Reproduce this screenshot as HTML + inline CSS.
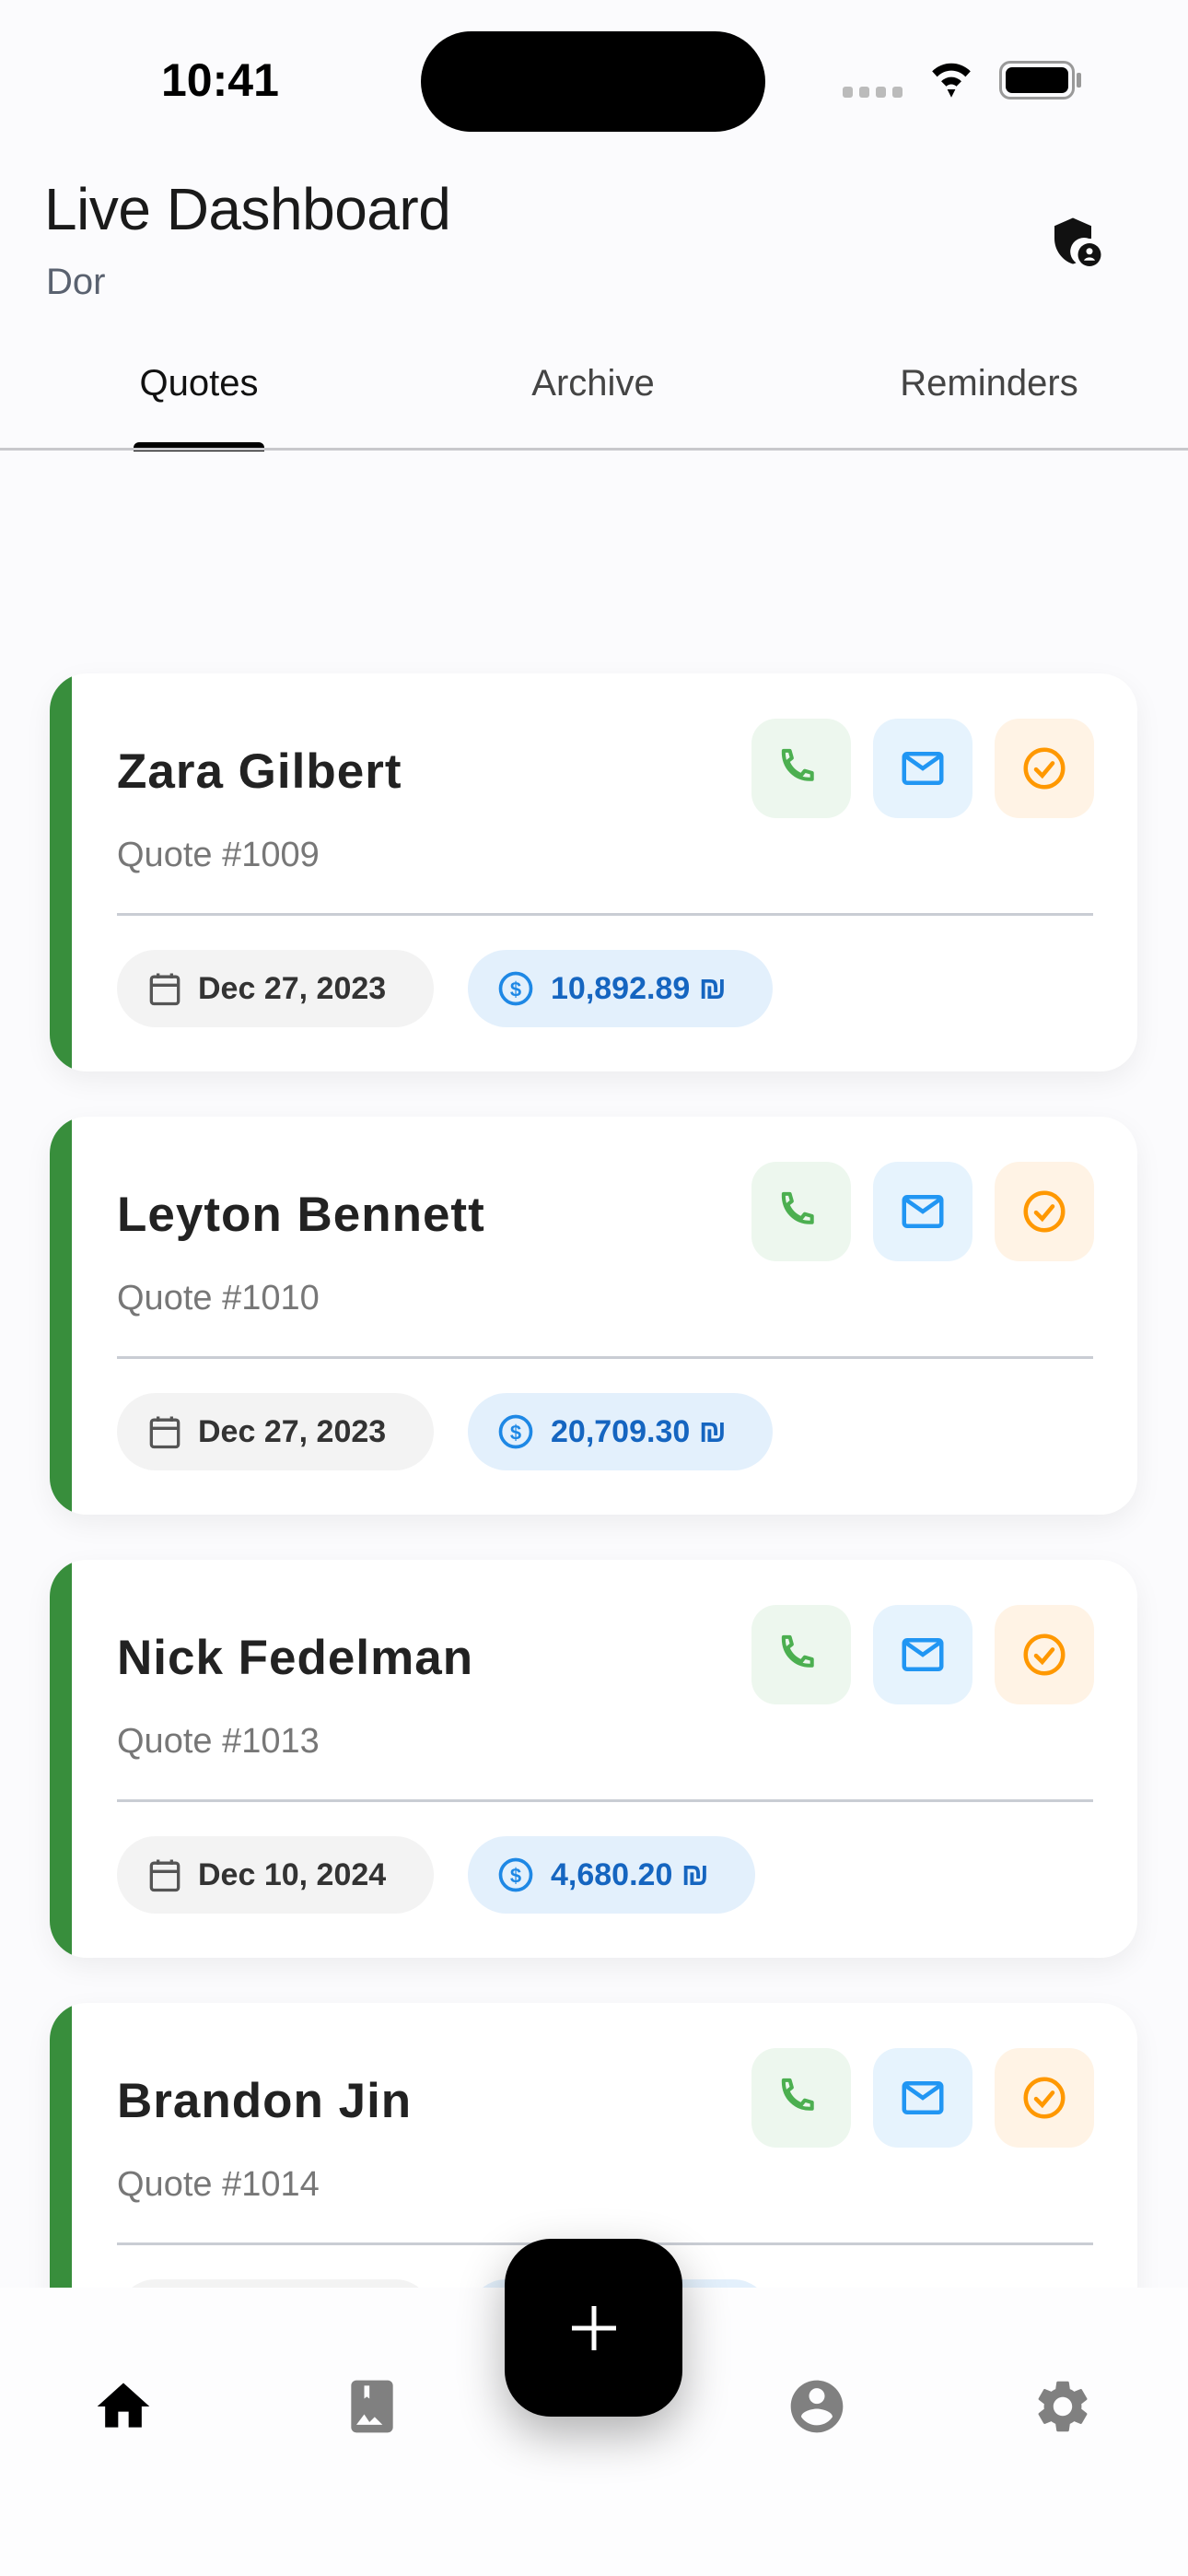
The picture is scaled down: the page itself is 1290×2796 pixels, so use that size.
<!DOCTYPE html>
<html><head><meta charset="utf-8"><style>
*{margin:0;padding:0;box-sizing:border-box}
body{width:1290px;height:2796px;background:#fbfbfd;font-family:"Liberation Sans",sans-serif;position:relative;overflow:hidden}
.abs{position:absolute}
.card{position:absolute;left:54px;width:1181px;height:432px;background:#fff;border-radius:40px;overflow:hidden;box-shadow:0 10px 30px rgba(0,0,0,0.06)}
.card .bar{position:absolute;left:0;top:0;bottom:0;width:24px;background:#388e3c}
.name{position:absolute;left:73px;top:76px;font-size:53px;font-weight:bold;color:#222;letter-spacing:1px}
.qn{position:absolute;left:73px;top:176px;font-size:38px;color:#777}
.div{position:absolute;left:73px;top:260px;width:1060px;height:3px;background:#c9cdd4}
.chip{position:absolute;top:300px;height:84px;border-radius:42px;font-size:34px;font-weight:bold;display:flex;align-items:center}
.date{left:73px;width:344px;background:#f3f3f3;color:#333;padding-left:30px}
.amt{left:454px;background:#e3f0fc;color:#1565c0;padding:0 50px 0 30px}
.btn{position:absolute;top:49px;width:108px;height:108px;border-radius:27px;display:flex;align-items:center;justify-content:center}
.b1{left:762px;background:#edf7ee}.b2{left:894px;background:#e6f3fd}.b3{left:1026px;background:#fff3e5}
.tab{position:absolute;top:394px;font-size:40px;color:#444;transform:translateX(-50%)}
</style></head><body>
<div class="abs" style="left:175px;top:58px;font-size:50px;font-weight:bold;color:#000">10:41</div>
<div class="abs" style="left:457px;top:34px;width:374px;height:109px;border-radius:55px;background:#000"></div>
<div class="abs" style="left:915px;top:94px;display:flex;gap:7px"><div style="width:11px;height:12px;background:#bbb;border-radius:3px"></div><div style="width:11px;height:12px;background:#bbb;border-radius:3px"></div><div style="width:11px;height:12px;background:#bbb;border-radius:3px"></div><div style="width:11px;height:12px;background:#bbb;border-radius:3px"></div></div>
<svg class="abs" style="left:1004px;top:62px" width="58" height="46" viewBox="0 0 40 42"><path d="M1 14 A27 27 0 0 1 39 14 L34 19.5 A19 19 0 0 0 6 19.5Z M10 24 A14 14 0 0 1 30 24 L25 29 A7 7 0 0 0 15 29Z M16 32 L20 40 L24 32Z" fill="#000"/></svg>
<div class="abs" style="left:1085px;top:66px;width:82px;height:42px;border:3px solid #999;border-radius:12px;padding:4px"><div style="width:100%;height:100%;background:#000;border-radius:7px"></div></div>
<div class="abs" style="left:1169px;top:79px;width:5px;height:16px;background:#999;border-radius:2px"></div>

<div class="abs" style="left:48px;top:190px;font-size:64px;color:#1a1a1a;letter-spacing:-0.5px">Live Dashboard</div>
<div class="abs" style="left:50px;top:284px;font-size:40px;color:#5a6270">Dor</div>
<svg class="abs" style="left:1140px;top:234px" width="60" height="60" viewBox="0 0 24 24"><path d="M10 1 L2 4.5 V10 C2 15 5.4 19.6 10 21 C10.5 20.9 11 20.7 11.4 20.5 A6 6 0 0 1 17 10 C17.5 10 18 10 18 10 V4.5Z" fill="#111"/><circle cx="17.2" cy="17" r="5" fill="#111"/><circle cx="17.2" cy="15.5" r="1.4" fill="#fff"/><path d="M14.8 19.5 A2.6 2.2 0 0 1 19.6 19.5Z" fill="#fff"/></svg>

<div class="tab" style="left:216px;color:#111">Quotes</div>
<div class="tab" style="left:644px">Archive</div>
<div class="tab" style="left:1074px">Reminders</div>
<div class="abs" style="left:145px;top:480px;width:142px;height:10px;background:#000;border-radius:6px 6px 0 0"></div>
<div class="abs" style="left:0;top:486px;width:1290px;height:3px;background:#c8c8cc"></div>

<!-- cards -->
<div class="card" style="top:731px"><div class="bar"></div><div class="name">Zara Gilbert</div><div class="qn">Quote #1009</div><div class="div"></div>
<div class="chip date"><svg width="44" height="44" viewBox="0 0 24 24"><rect x="4" y="5" width="16" height="16" rx="1.5" fill="none" stroke="#555" stroke-width="1.8"/><path d="M4 10H20M8 3V6M16 3V6" stroke="#555" stroke-width="1.8"/></svg><span style="margin-left:14px">Dec 27, 2023</span></div>
<div class="chip amt"><svg width="44" height="44" viewBox="0 0 24 24"><circle cx="12" cy="12" r="9" fill="none" stroke="#1e88e5" stroke-width="2"/><text x="12" y="16.5" font-size="12" text-anchor="middle" fill="#1e88e5" font-family="Liberation Sans">$</text></svg><span style="margin-left:16px">10,892.89 ₪</span></div>
<div class="btn b1"><svg width="54" height="54" viewBox="0 0 24 24"><path d="M3.5 3.5h3l1 3.5-2 1.6c1.2 3 3.6 5.4 6.6 6.6l1.6-2 3.5 1v3c-8 .5-14-5.5-13.7-13.7z" fill="none" stroke="#4caf50" stroke-width="1.8" stroke-linejoin="round"/></svg></div>
<div class="btn b2"><svg width="54" height="54" viewBox="0 0 24 24"><rect x="3" y="5" width="18" height="14" rx="1.5" fill="none" stroke="#2196f3" stroke-width="2"/><path d="M3.5 6l8.5 6 8.5-6" fill="none" stroke="#2196f3" stroke-width="2"/></svg></div>
<div class="btn b3"><svg width="54" height="54" viewBox="0 0 24 24"><circle cx="12" cy="12" r="9" fill="none" stroke="#ff9800" stroke-width="2"/><path d="M8 12.5l3 3 5-6" fill="none" stroke="#ff9800" stroke-width="2" stroke-linecap="round"/></svg></div></div>

<div class="card" style="top:1212px"><div class="bar"></div><div class="name">Leyton Bennett</div><div class="qn">Quote #1010</div><div class="div"></div>
<div class="chip date"><svg width="44" height="44" viewBox="0 0 24 24"><rect x="4" y="5" width="16" height="16" rx="1.5" fill="none" stroke="#555" stroke-width="1.8"/><path d="M4 10H20M8 3V6M16 3V6" stroke="#555" stroke-width="1.8"/></svg><span style="margin-left:14px">Dec 27, 2023</span></div>
<div class="chip amt"><svg width="44" height="44" viewBox="0 0 24 24"><circle cx="12" cy="12" r="9" fill="none" stroke="#1e88e5" stroke-width="2"/><text x="12" y="16.5" font-size="12" text-anchor="middle" fill="#1e88e5" font-family="Liberation Sans">$</text></svg><span style="margin-left:16px">20,709.30 ₪</span></div>
<div class="btn b1"><svg width="54" height="54" viewBox="0 0 24 24"><path d="M3.5 3.5h3l1 3.5-2 1.6c1.2 3 3.6 5.4 6.6 6.6l1.6-2 3.5 1v3c-8 .5-14-5.5-13.7-13.7z" fill="none" stroke="#4caf50" stroke-width="1.8" stroke-linejoin="round"/></svg></div>
<div class="btn b2"><svg width="54" height="54" viewBox="0 0 24 24"><rect x="3" y="5" width="18" height="14" rx="1.5" fill="none" stroke="#2196f3" stroke-width="2"/><path d="M3.5 6l8.5 6 8.5-6" fill="none" stroke="#2196f3" stroke-width="2"/></svg></div>
<div class="btn b3"><svg width="54" height="54" viewBox="0 0 24 24"><circle cx="12" cy="12" r="9" fill="none" stroke="#ff9800" stroke-width="2"/><path d="M8 12.5l3 3 5-6" fill="none" stroke="#ff9800" stroke-width="2" stroke-linecap="round"/></svg></div></div>

<div class="card" style="top:1693px"><div class="bar"></div><div class="name">Nick Fedelman</div><div class="qn">Quote #1013</div><div class="div"></div>
<div class="chip date"><svg width="44" height="44" viewBox="0 0 24 24"><rect x="4" y="5" width="16" height="16" rx="1.5" fill="none" stroke="#555" stroke-width="1.8"/><path d="M4 10H20M8 3V6M16 3V6" stroke="#555" stroke-width="1.8"/></svg><span style="margin-left:14px">Dec 10, 2024</span></div>
<div class="chip amt"><svg width="44" height="44" viewBox="0 0 24 24"><circle cx="12" cy="12" r="9" fill="none" stroke="#1e88e5" stroke-width="2"/><text x="12" y="16.5" font-size="12" text-anchor="middle" fill="#1e88e5" font-family="Liberation Sans">$</text></svg><span style="margin-left:16px">4,680.20 ₪</span></div>
<div class="btn b1"><svg width="54" height="54" viewBox="0 0 24 24"><path d="M3.5 3.5h3l1 3.5-2 1.6c1.2 3 3.6 5.4 6.6 6.6l1.6-2 3.5 1v3c-8 .5-14-5.5-13.7-13.7z" fill="none" stroke="#4caf50" stroke-width="1.8" stroke-linejoin="round"/></svg></div>
<div class="btn b2"><svg width="54" height="54" viewBox="0 0 24 24"><rect x="3" y="5" width="18" height="14" rx="1.5" fill="none" stroke="#2196f3" stroke-width="2"/><path d="M3.5 6l8.5 6 8.5-6" fill="none" stroke="#2196f3" stroke-width="2"/></svg></div>
<div class="btn b3"><svg width="54" height="54" viewBox="0 0 24 24"><circle cx="12" cy="12" r="9" fill="none" stroke="#ff9800" stroke-width="2"/><path d="M8 12.5l3 3 5-6" fill="none" stroke="#ff9800" stroke-width="2" stroke-linecap="round"/></svg></div></div>

<div class="card" style="top:2174px"><div class="bar"></div><div class="name">Brandon Jin</div><div class="qn">Quote #1014</div><div class="div"></div>
<div class="chip date"></div><div class="chip amt" style="width:330px"></div>
<div class="btn b1"><svg width="54" height="54" viewBox="0 0 24 24"><path d="M3.5 3.5h3l1 3.5-2 1.6c1.2 3 3.6 5.4 6.6 6.6l1.6-2 3.5 1v3c-8 .5-14-5.5-13.7-13.7z" fill="none" stroke="#4caf50" stroke-width="1.8" stroke-linejoin="round"/></svg></div>
<div class="btn b2"><svg width="54" height="54" viewBox="0 0 24 24"><rect x="3" y="5" width="18" height="14" rx="1.5" fill="none" stroke="#2196f3" stroke-width="2"/><path d="M3.5 6l8.5 6 8.5-6" fill="none" stroke="#2196f3" stroke-width="2"/></svg></div>
<div class="btn b3"><svg width="54" height="54" viewBox="0 0 24 24"><circle cx="12" cy="12" r="9" fill="none" stroke="#ff9800" stroke-width="2"/><path d="M8 12.5l3 3 5-6" fill="none" stroke="#ff9800" stroke-width="2" stroke-linecap="round"/></svg></div></div>

<!-- bottom nav -->
<div class="abs" style="left:0;top:2483px;width:1290px;height:313px;background:#fdfdfe"></div>
<svg class="abs" style="left:100px;top:2578px" width="68" height="68" viewBox="0 0 24 24"><path d="M10 20v-6h4v6h5v-8h3L12 3 2 12h3v8z" fill="#000"/></svg>
<svg class="abs" style="left:370px;top:2578px" width="68" height="68" viewBox="0 0 24 24"><path d="M18 2H6c-1.1 0-2 .9-2 2v16c0 1.1.9 2 2 2h12c1.1 0 2-.9 2-2V4c0-1.1-.9-2-2-2zM9 4h2v5l-1-.75L9 9V4zm-3 15l3-4 2 3 2-2 3 3H6z" fill="#808080"/></svg>
<svg class="abs" style="left:853px;top:2578px" width="68" height="68" viewBox="0 0 24 24"><path d="M12 2C6.48 2 2 6.48 2 12s4.48 10 10 10 10-4.48 10-10S17.520 2 12 2zm0 3c1.66 0 3 1.34 3 3s-1.34 3-3 3-3-1.34-3-3 1.34-3 3-3zm0 14.2c-2.5 0-4.710-1.28-6-3.22.03-1.99 4-3.08 6-3.08 1.99 0 5.97 1.09 6 3.08-1.29 1.94-3.5 3.22-6 3.22z" fill="#808080"/></svg>
<svg class="abs" style="left:1120px;top:2578px" width="68" height="68" viewBox="0 0 24 24"><path d="M19.14 12.94c.04-.3.06-.61.06-.94 0-.32-.02-.64-.07-.94l2.03-1.58a.49.49 0 0 0 .12-.61l-1.92-3.320a.488.488 0 0 0-.59-.22l-2.39.96c-.5-.38-1.03-.7-1.62-.94l-.36-2.54a.484.484 0 0 0-.48-.41h-3.84c-.24 0-.43.17-.47.41l-.36 2.54c-.59.24-1.13.57-1.62.94l-2.39-.96c-.22-.08-.47 0-.59.22L2.74 8.87c-.12.21-.08.47.12.61l2.03 1.58c-.05.3-.09.63-.09.94s.02.64.07.94l-2.03 1.58a.49.49 0 0 0-.12.61l1.92 3.32c.12.22.37.29.59.22l2.39-.96c.5.38 1.03.7 1.62.94l.36 2.54c.05.24.24.41.48.41h3.84c.24 0 .44-.17.47-.41l.36-2.54c.59-.24 1.13-.56 1.62-.94l2.39.96c.22.08.47 0 .59-.22l1.92-3.32c.12-.22.07-.47-.12-.61l-2.01-1.58zM12 15.6c-1.98 0-3.6-1.62-3.6-3.6s1.62-3.6 3.6-3.6 3.6 1.62 3.6 3.6-1.62 3.6-3.6 3.6z" fill="#808080"/></svg>
<div class="abs" style="left:548px;top:2430px;width:193px;height:193px;border-radius:50px;background:#000;box-shadow:0 20px 50px rgba(0,0,0,0.3);display:flex;align-items:center;justify-content:center"><svg width="60" height="60" viewBox="0 0 60 60"><path d="M30 6V54M6 30H54" stroke="#fff" stroke-width="5"/></svg></div>
</body></html>
